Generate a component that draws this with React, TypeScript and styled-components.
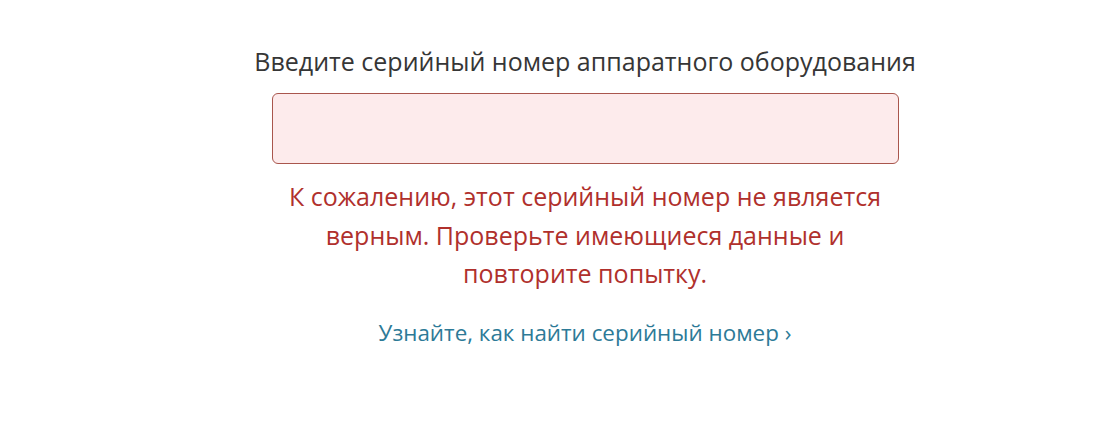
import React, { useState } from 'react';
import styled, { createGlobalStyle } from 'styled-components';

const GlobalStyle = createGlobalStyle`
  html, body {
    margin: 0;
    padding: 0;
    background: #ffffff;
  }
  body {
    font-family: 'Open Sans', 'Noto Sans', sans-serif;
  }
`;

export const App = () => {
  const [serial, setSerial] = useState('');

  return (
    <Page>
      <GlobalStyle />
      <Form onSubmit={(e) => e.preventDefault()}>
        <Label htmlFor="serial">
          Введите серийный номер аппаратного оборудования
        </Label>
        <SerialInput
          id="serial"
          name="serial"
          type="text"
          $invalid={true}
          value={serial}
          onChange={(e) => setSerial(e.target.value)}
        />
        <ErrorMessage>
          К сожалению, этот серийный номер не является верным. Проверьте
          имеющиеся данные и повторите попытку.
        </ErrorMessage>
        <HelpLink href="#">
          Узнайте, как найти серийный номер ›
        </HelpLink>
      </Form>
    </Page>
  );
};

export default App;

const Page = styled.div`
  width: 1120px;
  height: 441px;
  padding-left: 50px;
  box-sizing: border-box;
  display: flex;
  justify-content: center;
`;

const Form = styled.form`
  display: flex;
  flex-direction: column;
  align-items: center;
  padding-top: 43px;
`;

const Label = styled.label`
  font-size: 25px;
  line-height: 36px;
  color: #363636;
  margin-bottom: 14px;
`;

const SerialInput = styled.input<{ $invalid?: boolean }>`
  width: 627px;
  height: 71px;
  box-sizing: border-box;
  border-radius: 6px;
  border: 1.5px solid ${(p) => (p.$invalid ? '#a9564d' : '#bbbbbb')};
  background: ${(p) => (p.$invalid ? '#fdebec' : '#ffffff')};
  font: inherit;
  font-size: 22px;
  padding: 0 16px;
  outline: none;
`;

const ErrorMessage = styled.p`
  width: 615px;
  margin: 13px 0 0;
  text-align: center;
  font-size: 25px;
  line-height: 38.5px;
  color: #b0302c;
`;

const HelpLink = styled.a`
  margin-top: 25px;
  font-size: 22.4px;
  line-height: 30px;
  color: #2d7a97;
  text-decoration: none;
`;
